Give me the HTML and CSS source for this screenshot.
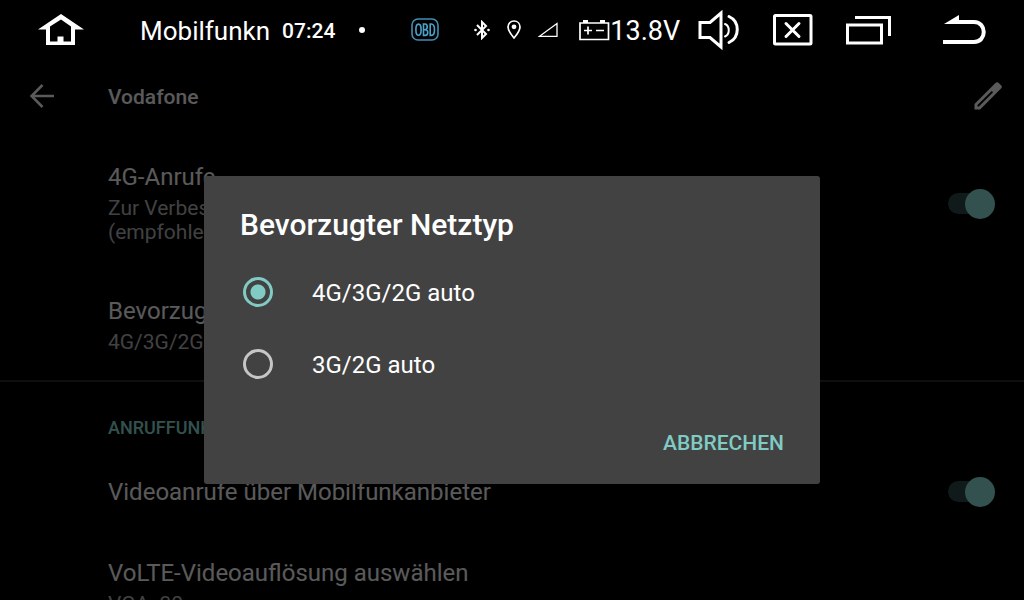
FILE: index.html
```html
<!DOCTYPE html>
<html lang="de">
<head>
  <meta charset="UTF-8" />
  <title>Mobilfunknetz</title>
  <meta name="viewport" content="width=device-width, initial-scale=1.0"/>
  <link rel="stylesheet" href="styles.css">
</head>

<body>
  <!-- Status bar -->
  <header class="statusbar">
    <div class="status-left">
      <button class="icon-btn home" aria-label="Startseite">
        <svg width="48" height="36" viewBox="0 0 48 36">
          <path d="M1 17.500 L24 2 L47 17.500 L38 17.500 L38 33 L9 33 L9 17.500 Z M13 14.500 L13 29.500 L20.500 29.500 L20.500 24.500 L26.500 24.500 L26.500 29.500 L34 29.500 L34 14.500 L24 7.500 Z" fill="#fff" fill-rule="evenodd"/>
        </svg>
      </button>
      <span class="status-title">Mobilfunkn</span>
      <span class="clock">07:24</span>
      <span class="dot"></span>
    </div>

    <div class="status-icons">
      <svg class="obd" width="28" height="24" viewBox="0 0 28 24">
        <rect x="1" y="1" width="26" height="21" rx="6" fill="none" stroke="#3f8fb5" stroke-width="1.6"/>
        <g fill="none" stroke="#4ba3cc" stroke-width="1.6">
          <ellipse cx="7.500" cy="11.700" rx="2.600" ry="5.600"/>
          <path d="M12.500 6V17.400H14.200C17.600 17.400 17.600 11.700 14.200 11.700H12.500H14C17 11.700 17 6 14 6Z"/>
          <path d="M19.200 6V17.400H20.200C24.600 17.400 24.600 6 20.200 6Z"/>
        </g>
      </svg>
      <svg class="bluetooth" width="18" height="20" viewBox="0 0 18 20">
        <path d="M4 5L13 14L9 18V2L13 6L4 15" fill="none" stroke="#fff" stroke-width="2"/>
        <circle cx="2.500" cy="10" r="1.300" fill="#fff"/>
        <circle cx="15.500" cy="10" r="1.300" fill="#fff"/>
      </svg>
      <svg class="pin" width="14" height="20" viewBox="0 0 14 20">
        <path d="M7 1C3.500 1 1 3.600 1 7C1 11 7 18 7 18S13 11 13 7C13 3.600 10.500 1 7 1Z" fill="none" stroke="#fff" stroke-width="1.700"/>
        <circle cx="7" cy="6.800" r="2.400" fill="#fff"/>
      </svg>
      <svg class="signal" width="22" height="16" viewBox="0 0 22 16">
        <path d="M2.500 14.300H20V1.500Z" fill="none" stroke="#fff" stroke-width="1.300"/>
      </svg>
      <svg class="battery" width="31" height="22" viewBox="0 0 31 22">
        <path d="M1 4H29.500V20.500H1Z" fill="none" stroke="#fff" stroke-width="1.700"/>
        <path d="M4 1H9V4H4ZM21 1H26V4H21Z" fill="#fff"/>
        <path d="M5 11.500H13M9 7.500V15.500M17 11.500H25" stroke="#fff" stroke-width="1.700"/>
      </svg>
      <span class="voltage">13.8V</span>
    </div>

    <div class="status-nav">
      <button class="icon-btn" aria-label="Lautstärke">
        <svg width="42" height="40" viewBox="0 0 42 40">
          <g fill="none" stroke="#fff">
            <path d="M2 12.500H12L23 3V37L12 27.500H2Z" stroke-width="3"/>
            <path d="M27 14C32 16 32 24.500 27 26.500" stroke-width="2" stroke-linecap="round"/>
            <path d="M31 6.500C42 11.500 42 27.500 31 32.500" stroke-width="3" stroke-linecap="round"/>
          </g>
        </svg>
      </button>
      <button class="icon-btn" aria-label="Schließen">
        <svg width="40" height="32" viewBox="0 0 40 32">
          <rect x="1.500" y="1.500" width="36.500" height="28.500" rx="1" fill="none" stroke="#fff" stroke-width="3"/>
          <path d="M13 9.500L26 22.500M26 9.500L13 22.500" stroke="#fff" stroke-width="3" stroke-linecap="round"/>
        </svg>
      </button>
      <button class="icon-btn" aria-label="Fenster">
        <svg width="46" height="30" viewBox="0 0 46 30">
          <path d="M9 2.500H43.500V21" fill="none" stroke="#fff" stroke-width="3"/>
          <rect x="1.500" y="10" width="34" height="18" fill="none" stroke="#fff" stroke-width="3"/>
        </svg>
      </button>
      <button class="icon-btn" aria-label="Zurück">
        <svg width="44" height="32" viewBox="0 0 44 32">
          <path d="M0 28H31C44 28 44 8 31 8H12" fill="none" stroke="#fff" stroke-width="4"/>
          <path d="M1 10L16 1V10Z" fill="#fff"/>
        </svg>
      </button>
    </div>
  </header>

  <div class="screen">
    <!-- App bar -->
    <div class="appbar">
      <button class="icon-btn" aria-label="Nach oben">
        <svg width="24" height="24" viewBox="0 0 24 24">
          <path d="M24 12H1.500M12.500 1L1.500 12L12.500 23" fill="none" stroke="#e0e0e0" stroke-width="2.600"/>
        </svg>
      </button>
      <h1>Vodafone</h1>
      <button class="icon-btn" aria-label="Bearbeiten">
        <svg width="36" height="36" viewBox="0 0 24 24">
          <path d="M3 17.250V21H6.750L20.700 7.050C21.400 6.350 21.400 5.500 20.700 4.800L19.200 3.300C18.500 2.600 17.650 2.600 16.950 3.300ZM5 18.080L14.500 8.600L15.400 9.500L5.920 19H5Z" fill="#e0e0e0" fill-rule="evenodd"/>
        </svg>
      </button>
    </div>

    <!-- Settings list -->
    <main class="settings">
      <div class="setting">
        <div class="setting-text">
          <label class="setting-title" for="calls4g">4G-Anrufe</label>
          <p>Zur Verbesserung<br>(empfohlen)</p>
        </div>
        <input type="checkbox" class="switch" id="calls4g" checked>
      </div>
      <div class="setting">
        <div class="setting-text">
          <span class="setting-title">Bevorzugter Netztyp</span>
          <p>4G/3G/2G auto</p>
        </div>
      </div>
      <h2 class="category">ANRUFFUNKTIONEN</h2>
      <div class="setting">
        <div class="setting-text">
          <label class="setting-title" for="videocalls">Videoanrufe über Mobilfunkanbieter</label>
        </div>
        <input type="checkbox" class="switch" id="videocalls" checked>
      </div>
      <div class="setting">
        <div class="setting-text">
          <span class="setting-title">VoLTE-Videoauflösung auswählen</span>
          <p>VGA: 30</p>
        </div>
      </div>
    </main>

    <!-- Network type dialog -->
    <div class="scrim">
      <form class="dialog" role="dialog" aria-labelledby="dialogTitle">
        <h2 id="dialogTitle">Bevorzugter Netztyp</h2>
        <label class="option">
          <input type="radio" name="network" checked>
          <span>4G/3G/2G auto</span>
        </label>
        <label class="option">
          <input type="radio" name="network">
          <span>3G/2G auto</span>
        </label>
        <div class="actions">
          <button type="button">ABBRECHEN</button>
        </div>
      </form>
    </div>
  </div>
</body>
</html>
```
FILE: styles.css
```css
/* =============== BASE =============== */
* {
  box-sizing: border-box;
}
body {
  margin: 0;
  height: 100vh;
  display: flex;
  flex-direction: column;
  overflow: hidden;
  background: #000;
  color: #fff;
  font-family: Roboto, sans-serif;
}
h1,
h2,
p {
  margin: 0;
}
svg {
  display: block;
  flex: none;
}
.icon-btn {
  padding: 0;
  border: none;
  background: none;
}

/* =============== STATUS BAR =============== */
.statusbar {
  flex: none;
  display: flex;
  align-items: center;
  height: 60px;
  padding: 0 37px;
}
.status-left,
.status-icons,
.status-nav {
  display: flex;
  align-items: center;
}
.status-title {
  padding-top: 2px;
  margin: 0 12px 0 55px;
  font-size: 26px;
}
.clock {
  padding-top: 2px;
  font-size: 21px;
  font-weight: 500;
}
.dot {
  width: 6px;
  height: 6px;
  margin-left: 24px;
  border-radius: 50%;
  background: #fff;
}
.status-icons {
  margin-left: 46px;
}
.obd {
  margin-right: 34px;
}
.bluetooth,
.pin {
  margin-right: 16px;
}
.signal {
  margin-right: 20px;
}
.voltage {
  padding-top: 2px;
  font-size: 27px;
}
.status-nav {
  gap: 33px;
  margin-left: auto;
}
.status-nav .icon-btn:last-child {
  margin-left: 18px;
}

/* =============== APP BAR =============== */
.screen {
  position: relative;
  flex: 1;
  min-height: 0;
  overflow: hidden;
}
.appbar {
  display: flex;
  align-items: center;
  height: 72px;
  padding: 0 18px 0 30px;
}
.appbar h1 {
  flex: 1;
  padding-top: 2px;
  margin-left: 54px;
  font-size: 21px;
  font-weight: 500;
  color: #e0e0e0;
}

/* =============== SETTINGS =============== */
.settings {
  padding-top: 4px;
}
.setting {
  display: flex;
  align-items: center;
  justify-content: space-between;
  padding: 27px 29px 26px 108px;
}
.setting-title {
  display: block;
  font-size: 24px;
  line-height: 28px;
  color: #e0e0e0;
}
.setting p {
  margin-top: 5px;
  font-size: 21px;
  line-height: 24px;
  color: #a4a4a4;
}
.switch {
  appearance: none;
  position: relative;
  width: 47px;
  height: 30px;
  margin: -2px 0;
}
.switch::before,
.switch::after {
  content: "";
  position: absolute;
}
.switch::before {
  top: 4px;
  left: 0;
  width: 40px;
  height: 21px;
  border-radius: 11px;
  background: #2c4341;
}
.switch::after {
  top: 0;
  right: 0;
  width: 30px;
  height: 30px;
  border-radius: 50%;
  background: #80cbc4;
}
.category {
  padding: 35px 108px 13px;
  border-top: 2px solid #262626;
  font-size: 18px;
  font-weight: 500;
  line-height: 21px;
  color: #80cbc4;
}

/* =============== DIALOG =============== */
.scrim {
  position: absolute;
  inset: 0;
  display: flex;
  align-items: center;
  justify-content: center;
  background: rgba(0, 0, 0, 0.6);
}
.dialog {
  width: 616px;
  max-width: 90%;
  padding: 31px 36px 14px;
  border-radius: 3px;
  background: #424242;
}
.dialog h2 {
  margin-bottom: 13px;
  font-size: 30px;
  font-weight: 500;
  line-height: 36px;
}
.option {
  display: flex;
  align-items: center;
  gap: 39px;
  height: 72px;
  font-size: 24px;
}
.option span {
  padding-top: 2px;
}
.option input {
  appearance: none;
  width: 30px;
  height: 30px;
  margin: 0 0 0 3px;
  border: 3px solid #c6c6c6;
  border-radius: 50%;
}
.option input:checked {
  border-color: #80cbc4;
  background: radial-gradient(circle, #80cbc4 7px, transparent 8px);
}
.actions {
  display: flex;
  justify-content: flex-end;
  padding-top: 16px;
}
.actions button {
  height: 54px;
  padding: 0;
  border: none;
  background: none;
  color: #80cbc4;
  font-family: inherit;
  font-size: 21px;
  font-weight: 500;
}
```
